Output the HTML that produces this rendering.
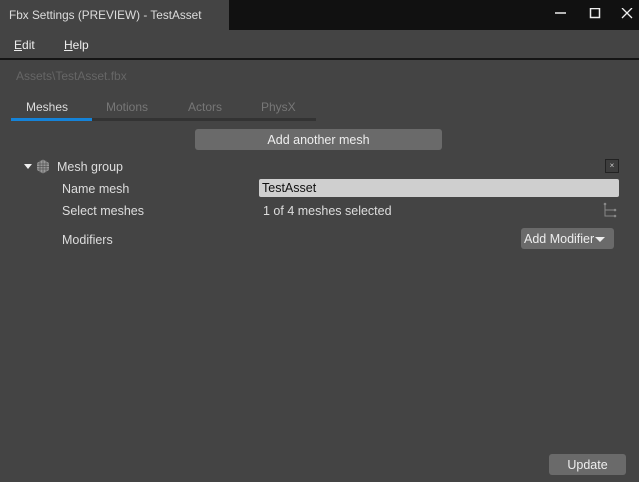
<!DOCTYPE html>
<html><head><style>
*{margin:0;padding:0;box-sizing:border-box}
body{width:639px;height:482px;background:#444;font-family:"Liberation Sans","DejaVu Sans",sans-serif;font-size:12px;color:#ddd;position:relative;overflow:hidden}
.a{position:absolute;white-space:nowrap}
.btn{position:absolute;background:#6a6a6a;border-radius:3px;color:#eee;text-align:center;font-size:12.5px}
</style></head><body>
<div class="a" style="left:0;top:0;width:229px;height:30px;background:#444"></div>
<div class="a" style="left:229px;top:0;width:410px;height:30px;background:#111"></div>
<div class="a" style="left:9px;top:8px;font-size:11.8px;color:#ddd">Fbx Settings (PREVIEW) - TestAsset</div>
<svg class="a" style="left:555px;top:8px" width="80" height="14">
<line x1="0" y1="5" x2="11" y2="5" stroke="#eee" stroke-width="1.5"/>
<rect x="35.5" y="0.5" width="9" height="9" fill="none" stroke="#eee" stroke-width="1.5"/>
<path d="M67 0 L77 10 M77 0 L67 10" stroke="#eee" stroke-width="1.3"/>
</svg>
<div class="a" style="left:0;top:30px;width:639px;height:28px;background:#444"></div>
<div class="a" style="left:14px;top:38px;color:#eee"><u>E</u>dit</div>
<div class="a" style="left:64px;top:38px;color:#eee"><u>H</u>elp</div>
<div class="a" style="left:0;top:58px;width:639px;height:2px;background:#151515"></div>
<div class="a" style="left:16px;top:69px;color:#666">Assets\TestAsset.fbx</div>
<div class="a" style="left:26px;top:100px;color:#ddd">Meshes</div>
<div class="a" style="left:106px;top:100px;color:#777">Motions</div>
<div class="a" style="left:188px;top:100px;color:#777">Actors</div>
<div class="a" style="left:261px;top:100px;color:#777">PhysX</div>
<div class="a" style="left:11px;top:118px;width:305px;height:3px;background:#333"></div>
<div class="a" style="left:11px;top:118px;width:81px;height:3px;background:#1583d8"></div>
<div class="btn" style="left:195px;top:129px;width:247px;height:21px;line-height:22px">Add another mesh</div>
<div class="a" style="left:24px;top:164px;width:0;height:0;border-left:4px solid transparent;border-right:4px solid transparent;border-top:5px solid #eee"></div>
<svg class="a" style="left:36px;top:159px" width="14" height="15"><polygon points="7,0.5 13,4 13,11 7,14.5 1,11 1,4" fill="#999"/><path d="M1 5H13M1 7.5H13M1 10H13M4 1V14M7 0V15M10 1V14" stroke="#555" stroke-width="0.8"/></svg>
<div class="a" style="left:57px;top:160px;color:#ddd;font-size:12.5px">Mesh group</div>
<div class="a" style="left:605px;top:159px;width:14px;height:14px;border:1px solid #222;background:#3d3d3d;color:#ccc;font-size:8px;text-align:center;line-height:12px">×</div>
<div class="a" style="left:62px;top:182px;font-size:12.5px">Name mesh</div>
<div class="a" style="left:259px;top:179px;width:360px;height:18px;background:#cfcfcf;border-radius:2px;color:#111;padding-left:3px;line-height:18px;font-size:12.5px">TestAsset</div>
<div class="a" style="left:62px;top:204px;font-size:12.5px">Select meshes</div>
<div class="a" style="left:263px;top:204px;font-size:12.5px">1 of 4 meshes selected</div>
<svg class="a" style="left:603px;top:202px" width="14" height="16"><path d="M2 2V14H12M2 8H12" stroke="#888" stroke-width="1" fill="none"/><circle cx="2" cy="2" r="1.3" fill="#888"/><circle cx="12" cy="8" r="1.3" fill="#888"/><circle cx="12" cy="14" r="1.3" fill="#888"/></svg>
<div class="a" style="left:62px;top:233px;font-size:12.5px">Modifiers</div>
<div class="btn" style="left:521px;top:228px;width:93px;height:21px;line-height:23px;text-align:left;padding-left:3px">Add Modifier<span style="display:inline-block;margin-left:1px;vertical-align:middle;border-left:5px solid transparent;border-right:5px solid transparent;border-top:5px solid #eee"></span></div>
<div class="btn" style="left:549px;top:454px;width:77px;height:21px;line-height:23px">Update</div>
</body></html>
